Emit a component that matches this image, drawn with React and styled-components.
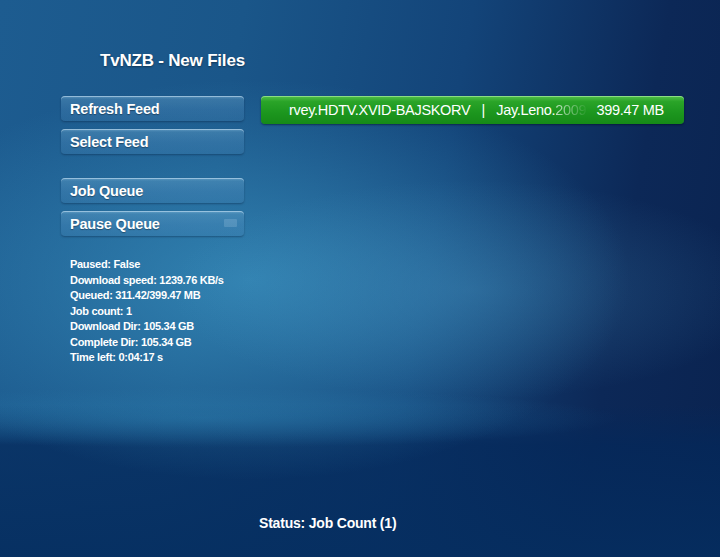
import React from 'react';
import styled, { createGlobalStyle } from 'styled-components';

const GlobalStyle = createGlobalStyle`
  html, body {
    margin: 0;
    padding: 0;
    width: 720px;
    height: 557px;
    overflow: hidden;
  }
  body {
    font-family: "Liberation Sans", Arial, sans-serif;
    color: #ffffff;
  }
`;

const Screen = styled.div`
  position: relative;
  width: 720px;
  height: 557px;
  box-sizing: border-box;
  padding: 51px 0 0 61px;
  display: flex;
  flex-direction: column;
  background:
    radial-gradient(ellipse 300px 110px at 470px 290px, rgba(80, 160, 205, 0.3), rgba(80, 160, 205, 0) 100%),
    radial-gradient(ellipse 380px 200px at 250px 280px, rgba(60, 150, 195, 0.7), rgba(60, 150, 195, 0) 100%),
    radial-gradient(ellipse 420px 30px at 200px 418px, rgba(40, 120, 170, 0.45), rgba(40, 120, 170, 0) 100%),
    linear-gradient(180deg, rgba(0, 0, 0, 0) 0, rgba(0, 0, 0, 0) 405px, rgba(4, 40, 90, 0.75) 445px, rgba(5, 45, 95, 0.92) 557px),
    linear-gradient(100deg, #1d5c90 0%, #1a5689 30%, #134479 58%, #0c2857 82%, #0a2350 100%);
`;

const Title = styled.h1`
  margin: 0 0 25px 39px;
  font-size: 17px;
  font-weight: bold;
  letter-spacing: -0.2px;
  text-shadow: 0 1px 2px rgba(0, 0, 0, 0.4);
`;

const Main = styled.div`
  display: flex;
  gap: 17px;
  align-items: flex-start;
`;

const Sidebar = styled.div`
  display: flex;
  flex-direction: column;
  width: 183px;
`;

const ButtonGroup = styled.div`
  display: flex;
  flex-direction: column;
  gap: 8px;
  margin-bottom: ${p => p.$spacing || 0}px;
`;

const MenuButton = styled.div`
  position: relative;
  height: 25px;
  box-sizing: border-box;
  padding-left: 9px;
  display: flex;
  align-items: center;
  font-size: 14.5px;
  font-weight: bold;
  letter-spacing: -0.2px;
  border-radius: 4px;
  background: linear-gradient(180deg, rgba(150, 200, 230, 0.55) 0%, rgba(110, 170, 210, 0.35) 12%, rgba(90, 150, 200, 0.28) 55%, rgba(80, 140, 190, 0.22) 100%);
  box-shadow: inset 0 1px 0 rgba(220, 240, 255, 0.45), 0 1px 2px rgba(0, 20, 50, 0.35);
  text-shadow: 0 1px 1px rgba(0, 0, 0, 0.35);
`;

const Indicator = styled.span`
  position: absolute;
  right: 7px;
  top: 8px;
  width: 13px;
  height: 8px;
  border-radius: 1px;
  background: rgba(180, 215, 235, 0.22);
`;

const Stats = styled.div`
  margin-top: 21px;
  padding-left: 9px;
  font-size: 11px;
  font-weight: bold;
  line-height: 15.5px;
  letter-spacing: -0.3px;
`;

const FileBar = styled.div`
  width: 423px;
  height: 28px;
  box-sizing: border-box;
  padding-left: 28px;
  display: flex;
  align-items: center;
  font-size: 14.5px;
  white-space: nowrap;
  border-radius: 4px;
  background: linear-gradient(180deg, #52c04a 0%, #2aa428 20%, #1c961e 60%, #168a18 100%);
  box-shadow: inset 0 1px 0 rgba(200, 255, 190, 0.5), 0 1px 2px rgba(0, 10, 30, 0.5);
  letter-spacing: -0.3px;
`;

const Fade = styled.span`
  background: linear-gradient(90deg, rgba(255, 255, 255, 0.75), rgba(255, 255, 255, 0.05));
  -webkit-background-clip: text;
  background-clip: text;
  color: transparent;
  margin-right: 10px;
`;

const Status = styled.div`
  margin-top: auto;
  margin-bottom: 26px;
  margin-left: 198px;
  font-size: 14px;
  font-weight: bold;
  letter-spacing: -0.2px;
`;

const stats = [
  'Paused: False',
  'Download speed: 1239.76 KB/s',
  'Queued: 311.42/399.47 MB',
  'Job count: 1',
  'Download Dir: 105.34 GB',
  'Complete Dir: 105.34 GB',
  'Time left: 0:04:17 s',
];

export default function App() {
  return (
    <>
      <GlobalStyle />
      <Screen>
        <Title>TvNZB - New Files</Title>
        <Main>
          <Sidebar>
            <ButtonGroup $spacing={24}>
              <MenuButton>Refresh Feed</MenuButton>
              <MenuButton>Select Feed</MenuButton>
            </ButtonGroup>
            <ButtonGroup>
              <MenuButton>Job Queue</MenuButton>
              <MenuButton>
                Pause Queue
                <Indicator />
              </MenuButton>
            </ButtonGroup>
            <Stats>
              {stats.map(s => (
                <div key={s}>{s}</div>
              ))}
            </Stats>
          </Sidebar>
          <FileBar>
            rvey.HDTV.XVID-BAJSKORV&nbsp;&nbsp;&nbsp;|&nbsp;&nbsp;&nbsp;Jay.Leno.
            <Fade>2009</Fade>
            399.47 MB
          </FileBar>
        </Main>
        <Status>Status: Job Count (1)</Status>
      </Screen>
    </>
  );
}
